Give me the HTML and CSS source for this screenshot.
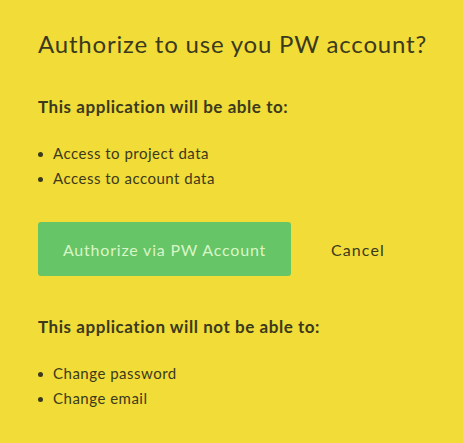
FILE: index.html
```html
<!DOCTYPE html>
<html>
<head>
<meta charset="utf-8">
<link rel="stylesheet" href="styles.css">
</head>
<body>
<div class="dialog">
  <h1 class="title">Authorize to use you PW account?</h1>
  <h2 class="subhead subhead-allow">This application will be able to:</h2>
  <ul class="perms">
    <li>Access to project data</li>
    <li>Access to account data</li>
  </ul>
  <div class="actions">
    <button class="btn-primary">Authorize via PW Account</button>
    <button class="btn-link">Cancel</button>
  </div>
  <h2 class="subhead">This application will not be able to:</h2>
  <ul class="perms perms-deny">
    <li>Change password</li>
    <li>Change email</li>
  </ul>
</div>
</body>
</html>
```
FILE: styles.css
```css
html, body {
  margin: 0;
  padding: 0;
  background: #f2dc37;
}
body {
  font-family: Lato, "Noto Sans", sans-serif;
  color: #3b3a1e;
}
.dialog {
  padding: 26px 20px 0 38px;
  display: flex;
  flex-direction: column;
}
.title {
  margin: 0;
  font-size: 24px;
  font-weight: 400;
  line-height: 36px;
  letter-spacing: 0.8px;
  white-space: nowrap;
}
.subhead {
  margin: 0;
  font-size: 17px;
  font-weight: 700;
  line-height: 22px;
  letter-spacing: 0.55px;
}
.subhead-allow {
  margin-top: 34px;
}
.perms {
  list-style: none;
  margin: 23px 0 0 0;
  padding: 0;
}
.perms-deny {
  margin-top: 23px;
}
.perms li {
  font-size: 15px;
  line-height: 25px;
  padding-left: 15px;
  position: relative;
  letter-spacing: 0.5px;
}
.perms li::before {
  content: "";
  position: absolute;
  left: 0;
  top: 11px;
  width: 5px;
  height: 5px;
  border-radius: 50%;
  background: #3b3a1e;
}
.actions {
  display: flex;
  align-items: center;
  margin-top: 31px;
  margin-bottom: 40px;
}
.btn-primary {
  width: 253px;
  height: 54px;
  border: none;
  border-radius: 3px;
  background: #66c566;
  color: #d8f5c8;
  font-family: inherit;
  font-size: 16px;
  letter-spacing: 0.8px;
  padding: 0;
}
.btn-link {
  margin-left: 40px;
  border: none;
  background: none;
  padding: 0;
  font-family: inherit;
  font-size: 16px;
  letter-spacing: 1.1px;
  color: #3b3a1e;
}
```
